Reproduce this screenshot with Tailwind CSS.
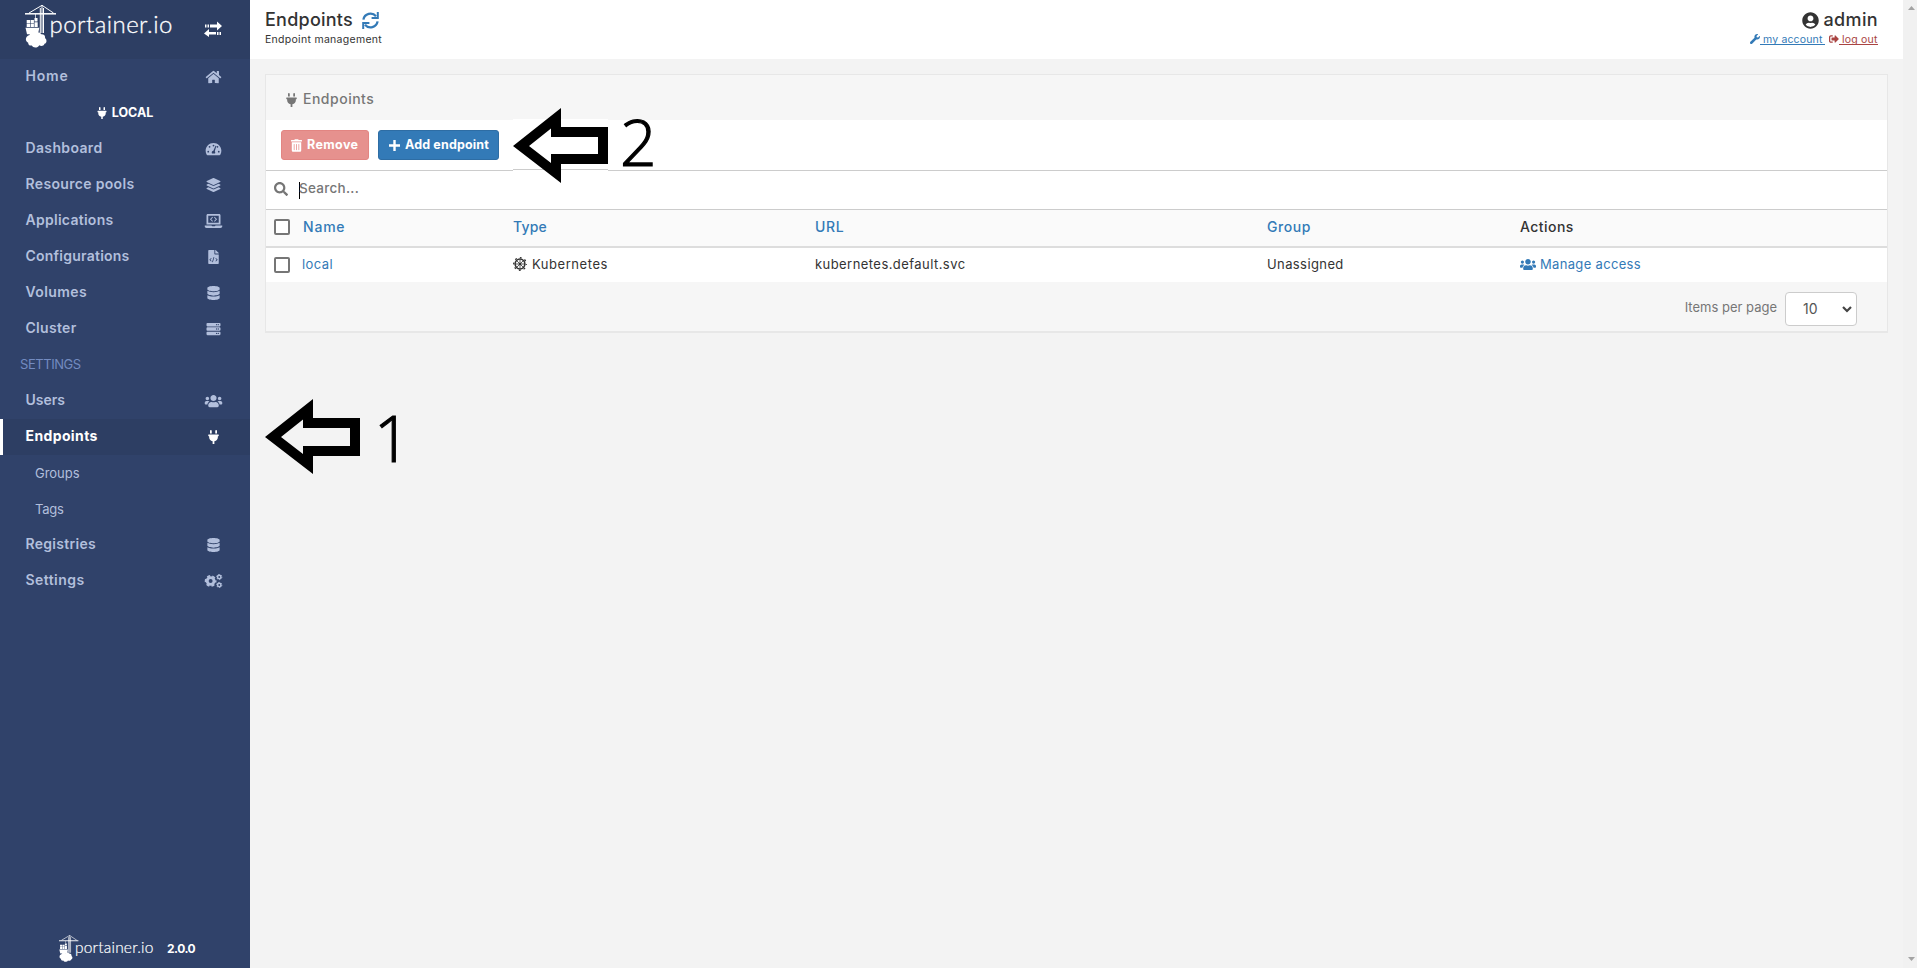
<!DOCTYPE html>
<html lang="en">
<head>
<meta charset="utf-8">
<title>Portainer</title>
<script src="https://cdn.jsdelivr.net/npm/@tailwindcss/browser@4"></script>
</head>
<body class="h-[968px] w-[1917px] overflow-hidden bg-[#f3f3f3] font-['Inter',sans-serif] text-[13px] leading-none whitespace-nowrap text-[#333]">
<svg class="hidden">
  <symbol id="home" viewBox="0 0 576 512"><path d="M280.37 148.26L96 300.11V464a16 16 0 0 0 16 16l112.06-.29a16 16 0 0 0 15.92-16V368a16 16 0 0 1 16-16h64a16 16 0 0 1 16 16v95.64a16 16 0 0 0 16 16.05L464 480a16 16 0 0 0 16-16V300L295.67 148.26a12.19 12.19 0 0 0-15.3 0zM571.6 251.47L488 182.56V44.05a12 12 0 0 0-12-12h-56a12 12 0 0 0-12 12v72.61L318.47 43a48 48 0 0 0-61 0L4.34 251.47a12 12 0 0 0-1.6 16.9l25.5 31A12 12 0 0 0 45.15 301l235.22-193.74a12.19 12.19 0 0 1 15.3 0L530.9 301a12 12 0 0 0 16.9-1.6l25.5-31a12 12 0 0 0-1.7-16.93z"/></symbol>
  <symbol id="plug" viewBox="0 0 384 512"><path d="M320 32a32 32 0 0 0-64 0v96h64zm48 128H16A16 16 0 0 0 0 176v32a16 16 0 0 0 16 16h16v32a160.07 160.07 0 0 0 128 156.8V512h64v-99.2A160.07 160.07 0 0 0 352 256v-32h16a16 16 0 0 0 16-16v-32a16 16 0 0 0-16-16zM128 32a32 32 0 0 0-64 0v96h64z"/></symbol>
  <symbol id="gauge" viewBox="0 0 576 512"><path fill-rule="evenodd" d="M288 32C129 32 0 161 0 320c0 53 14 102 39 145 6 9 16 15 27 15h444c11 0 21-6 27-15 25-43 39-92 39-145C576 161 447 32 288 32zM288 96a32 32 0 1 1 0 64a32 32 0 0 1 0-64zM144 144a32 32 0 1 1 0 64a32 32 0 0 1 0-64zM96 320a32 32 0 1 1 0 64a32 32 0 0 1 0-64zM480 320a32 32 0 1 1 0 64a32 32 0 0 1 0-64zM362 137l30 10-57 193c11 12 17 27 17 44 0 12-3 22-9 32H233c-6-10-9-20-9-32 0-34 27-62 60-64zM432 144a32 32 0 1 1 0 64a32 32 0 0 1 0-64z"/></symbol>
  <symbol id="layers" viewBox="0 0 512 512"><path d="M12.41 148.02l232.94 105.67c6.8 3.09 14.49 3.09 21.29 0l232.94-105.67c16.55-7.51 16.55-32.52 0-40.03L266.65 2.31a25.607 25.607 0 0 0-21.29 0L12.41 107.98c-16.55 7.51-16.55 32.53 0 40.04zm487.18 88.28l-58.09-26.33-161.64 73.27c-7.56 3.43-15.59 5.17-23.86 5.17s-16.29-1.74-23.86-5.17L70.51 209.97l-58.1 26.33c-16.55 7.5-16.55 32.5 0 40l232.94 105.59c6.8 3.08 14.49 3.08 21.29 0L499.59 276.3c16.55-7.5 16.55-32.5 0-40zm0 127.8l-57.87-26.23-161.86 73.37c-7.56 3.43-15.59 5.17-23.86 5.17s-16.29-1.74-23.86-5.17L70.29 337.87 12.41 364.1c-16.55 7.5-16.55 32.5 0 40l232.94 105.59c6.8 3.08 14.49 3.08 21.29 0L499.59 404.1c16.55-7.5 16.55-32.5 0-40z"/></symbol>
  <symbol id="laptop" viewBox="0 0 640 512"><path fill-rule="evenodd" d="M112 0h416c26 0 48 22 48 48v336H64V48C64 22 86 0 112 0zM128 64v256h384V64zM278 105l22 22-65 65 65 65-22 23-88-88zM362 105l-22 22 65 65-65 65 22 23 88-88zM0 416h250c0 18 14 32 32 32h76c18 0 32-14 32-32h250v32c0 35-29 64-64 64H64c-35 0-64-29-64-64z"/></symbol>
  <symbol id="filecode" viewBox="0 0 384 512"><path fill-rule="evenodd" d="M384 122v6H256V0h6c6 0 12 3 17 7l98 98c4 5 7 11 7 17zM248 160c-13 0-24-11-24-24V0H24C11 0 0 11 0 24v464c0 13 11 24 24 24h336c13 0 24-11 24-24V160zM123 401l-19 20-66-66 66-65 19 20-46 45zM168 451l-27-8 55-190 27 8zM280 421l-19-20 46-46-46-45 19-20 66 65z"/></symbol>
  <symbol id="db" viewBox="0 0 448 512"><path d="M448 73.143v45.714C448 159.143 347.667 192 224 192S0 159.143 0 118.857V73.143C0 32.857 100.333 0 224 0s224 32.857 224 73.143zM448 176v102.857C448 319.143 347.667 352 224 352S0 319.143 0 278.857V176c48.125 33.143 136.208 48.572 224 48.572S399.874 209.143 448 176zm0 160v102.857C448 479.143 347.667 512 224 512S0 479.143 0 438.857V336c48.125 33.143 136.208 48.572 224 48.572S399.874 369.143 448 336z"/></symbol>
  <symbol id="server" viewBox="0 0 512 512"><path id="unit" d="M480 160H32c-17.673 0-32-14.327-32-32V64c0-17.673 14.327-32 32-32h448c17.673 0 32 14.327 32 32v64c0 17.673-14.327 32-32 32zm-48-88c-13.255 0-24 10.745-24 24s10.745 24 24 24 24-10.745 24-24-10.745-24-24-24zm-64 0c-13.255 0-24 10.745-24 24s10.745 24 24 24 24-10.745 24-24-10.745-24-24-24z"/><use href="#unit" y="160"/><use href="#unit" y="320"/></symbol>
  <symbol id="users" viewBox="0 0 640 512"><path d="M96 224c35.3 0 64-28.7 64-64s-28.7-64-64-64-64 28.7-64 64 28.7 64 64 64zm448 0c35.3 0 64-28.7 64-64s-28.7-64-64-64-64 28.7-64 64 28.7 64 64 64zm32 32h-64c-17.6 0-33.5 7.1-45.1 18.6 40.3 22.1 68.9 62 75.1 109.4h66c17.7 0 32-14.3 32-32v-32c0-35.3-28.7-64-64-64zm-256 0c61.9 0 112-50.1 112-112S381.9 32 320 32 208 82.1 208 144s50.1 112 112 112zm76.8 32h-8.3c-20.8 10-43.9 16-68.5 16s-47.6-6-68.5-16h-8.3C179.6 288 128 339.6 128 403.2V432c0 26.5 21.5 48 48 48h288c26.5 0 48-21.5 48-48v-28.8c0-63.6-51.6-115.2-115.2-115.2zm-223.7-13.4C161.5 263.1 145.6 256 128 256H64c-35.3 0-64 28.7-64 64v32c0 17.7 14.3 32 32 32h65.9c6.3-47.4 34.9-87.3 75.2-109.4z"/></symbol>
  <symbol id="cogs" viewBox="0 0 640 512"><g fill="none" stroke="currentColor"><circle cx="215" cy="256" r="125" stroke-width="106"/><circle cx="215" cy="256" r="186" stroke-width="60" stroke-dasharray="112 82.700" stroke-dashoffset="56"/><circle cx="530" cy="110" r="62" stroke-width="54"/><circle cx="530" cy="110" r="94" stroke-width="34" stroke-dasharray="56 42.400"/><circle cx="530" cy="402" r="62" stroke-width="54"/><circle cx="530" cy="402" r="94" stroke-width="34" stroke-dasharray="56 42.400"/></g></symbol>
  <symbol id="search" viewBox="0 0 512 512"><path d="M505 442.7L405.3 343c-4.5-4.5-10.6-7-17-7H372c27.6-35.3 44-79.7 44-128C416 93.1 322.9 0 208 0S0 93.1 0 208s93.1 208 208 208c48.3 0 92.7-16.4 128-44v16.3c0 6.4 2.5 12.5 7 17l99.7 99.7c9.4 9.4 24.6 9.4 33.9 0l28.3-28.3c9.4-9.4 9.4-24.6.1-34zM208 336c-70.7 0-128-57.2-128-128 0-70.7 57.2-128 128-128 70.7 0 128 57.2 128 128 0 70.7-57.2 128-128 128z"/></symbol>
  <symbol id="wrench" viewBox="0 0 512 512"><path d="M507.73 109.1c-2.24-9.03-13.54-12.09-20.12-5.51l-74.36 74.36-67.88-11.31-11.31-67.88 74.36-74.36c6.62-6.62 3.43-17.9-5.66-20.16-47.38-11.74-99.55.91-136.58 37.93-39.64 39.64-50.55 97.1-34.05 147.2L18.74 402.76c-24.99 24.99-24.99 65.51 0 90.5 24.99 24.99 65.51 24.99 90.5 0l213.21-213.21c50.12 16.71 107.47 5.68 147.37-34.22 37.07-37.07 49.7-89.32 37.91-136.73z"/></symbol>
  <symbol id="user" viewBox="0 0 496 512"><path d="M248 8C111 8 0 119 0 256s111 248 248 248 248-111 248-248S385 8 248 8zm0 96c48.6 0 88 39.4 88 88s-39.4 88-88 88-88-39.4-88-88 39.4-88 88-88zm0 344c-58.7 0-111.3-26.6-146.5-68.2 18.8-35.4 55.6-59.8 98.5-59.8 2.4 0 4.8.4 7.1 1.1 13 4.2 26.6 6.9 40.9 6.9 14.3 0 28-2.7 40.9-6.9 2.3-.7 4.7-1.1 7.1-1.1 42.9 0 79.7 24.4 98.5 59.8C359.3 421.4 306.7 448 248 448z"/></symbol>
  <symbol id="signout" viewBox="0 0 512 512"><path d="M497 273L329 441c-15 15-41 4.5-41-17v-96H152c-13.3 0-24-10.7-24-24v-96c0-13.3 10.7-24 24-24h136V88c0-21.4 25.9-32 41-17l168 168c9.3 9.4 9.3 24.6 0 34zM192 436v-40c0-6.6-5.4-12-12-12H96c-17.7 0-32-14.3-32-32V160c0-17.7 14.3-32 32-32h84c6.6 0 12-5.4 12-12V76c0-6.6-5.4-12-12-12H96c-53 0-96 43-96 96v192c0 53 43 96 96 96h84c6.6 0 12-5.4 12-12z"/></symbol>
  <symbol id="trash" viewBox="0 0 448 512"><path d="M32 464a48 48 0 0 0 48 48h288a48 48 0 0 0 48-48V128H32zm272-256a16 16 0 0 1 32 0v224a16 16 0 0 1-32 0zm-96 0a16 16 0 0 1 32 0v224a16 16 0 0 1-32 0zm-96 0a16 16 0 0 1 32 0v224a16 16 0 0 1-32 0zM432 32H312l-9.4-18.7A24 24 0 0 0 281.1 0H166.8a23.72 23.72 0 0 0-21.4 13.3L136 32H16A16 16 0 0 0 0 48v32a16 16 0 0 0 16 16h416a16 16 0 0 0 16-16V48a16 16 0 0 0-16-16z"/></symbol>
  <symbol id="sync" viewBox="0 0 17 17"><g fill="none" stroke="currentColor" stroke-width="2.3"><path d="M1.4 7.6A7.2 7.2 0 0 1 14 4.2"/><path d="M15.6 9.4A7.2 7.2 0 0 1 3 12.8"/><path d="M15.8 0V6.1H9.6" stroke-width="2"/><path d="M1.2 17V10.9H7.4" stroke-width="2"/></g></symbol>
  <symbol id="helm" viewBox="0 0 14 14"><g fill="none" stroke="currentColor"><circle cx="7" cy="7" r="4.900" stroke-width="1.5"/><circle cx="7" cy="7" r="6.300" stroke-width="1.300" stroke-dasharray="1.800 3.148" stroke-dashoffset=".9"/><path d="M7 2.500v9M2.500 7h9M3.900 3.900l6.200 6.200M10.100 3.900l-6.200 6.200" stroke-width=".8"/></g><circle cx="7" cy="7" r="1.300"/></symbol>
  <symbol id="crane" viewBox="0 0 32 44"><g fill="none" stroke="currentColor"><path d="M0 8.8h31" stroke-width="1.5"/><path d="M17 .3L4 8M17 .3L28.500 8M15.300 3v25M18.500 3v25" stroke-width="1"/><path d="M17 0v28" stroke-width="1"/><path d="M10.500 9v4" stroke-width=".7"/></g><path d="M9.500 13h3v3.500h-3zM1.700 15h3.300v3.200H1.700zM5.600 15h3.300v3.200H5.600zM1.700 18.800h3.300V22H1.700zM5.600 18.800h3.300V22H5.600zM9.500 17.300h3.200V22H9.500zM.5 22.700h13.800l-1.300 6.500H2z"/><path d="M4.500 30c.5-2.500 4-3.200 5.800-1.200 2-1.800 5-1.500 6 .5 2.500-.3 4.200 1.500 3.700 3.700 2.300 1.800 1.800 5-.5 5.700-.7 2.300-3.500 2.800-5.200 1.500-1.500 3-6.300 3-7.500.3-2 .5-3.800-.8-3.600-2.800C-.2 36.500 0 31.200 4.500 30z"/></symbol>
</svg>

<div class="flex h-full">
  <aside class="flex w-[250px] shrink-0 flex-col bg-[#30426a] text-[14px] font-semibold text-[#b2bfdc]">
    <div class="flex h-[59px] items-start bg-[#2d3e63] pt-[5px] pl-[25px] text-white">
      <svg class="h-[44px] w-[32px] fill-current"><use href="#crane"/></svg>
      <span class="-ml-[7.500px] mt-[6px] w-[154.500px] font-['Lato'] text-[24px] leading-[26px] font-light tracking-[.45px] [-webkit-text-stroke:.3px_#fff]">portainer.io</span>
      <svg class="mt-[16px] h-4 w-[18px] fill-current" viewBox="0 0 18 16"><path d="M1 3.500h1.500v3H1zM3.500 3.500H5v3H3.500zM6 3.500h7V.5L18 5l-5 4.500V6.500H6zM17 11h-1.500v3H17zM14.500 11H13v3h1.500zM12 11H5V8L0 12.500 5 16v-2.500h7z"/></svg>
    </div>
    <nav class="flex flex-col">
      <div class="flex h-9 items-center pl-[25.500px]"><span class="mb-[2px] w-[172.500px] tracking-[.8px]">Home</span><svg class="h-[14px] w-[31px] fill-current"><use href="#home"/></svg></div>
      <div class="flex h-9 items-center justify-center gap-[5px] text-[12.500px] font-bold text-white"><svg class="h-3 w-[10px] fill-current"><use href="#plug"/></svg><span class="tracking-[-.03px]">LOCAL</span></div>
      <div class="flex h-9 items-center pl-[25.500px]"><span class="mb-[2px] w-[172.500px] tracking-[.35px]">Dashboard</span><svg class="h-[14px] w-[31px] fill-current"><use href="#gauge"/></svg></div>
      <div class="flex h-9 items-center pl-[25.500px]"><span class="mb-[2px] w-[172.500px] tracking-[.33px]">Resource pools</span><svg class="h-[14px] w-[31px] fill-current"><use href="#layers"/></svg></div>
      <div class="flex h-9 items-center pl-[25.500px]"><span class="mb-[2px] w-[172.500px] tracking-[.27px]">Applications</span><svg class="h-[14px] w-[31px] fill-current"><use href="#laptop"/></svg></div>
      <div class="flex h-9 items-center pl-[25.500px]"><span class="mb-[2px] w-[172.500px] tracking-[.23px]">Configurations</span><svg class="h-[14px] w-[31px] fill-current"><use href="#filecode"/></svg></div>
      <div class="flex h-9 items-center pl-[25.500px]"><span class="mb-[2px] w-[172.500px] tracking-[.4px]">Volumes</span><svg class="h-[14px] w-[31px] fill-current"><use href="#db"/></svg></div>
      <div class="flex h-9 items-center pl-[25.500px]"><span class="mb-[2px] w-[172.500px] tracking-[.3px]">Cluster</span><svg class="h-[14px] w-[31px] fill-current"><use href="#server"/></svg></div>
      <div class="flex h-9 items-center pl-5 text-[13px] font-normal text-[#738bc0]"><span class="mb-px tracking-[-.45px]">SETTINGS</span></div>
      <div class="flex h-9 items-center pl-[25.500px]"><span class="mb-[2px] w-[172.500px]">Users</span><svg class="h-[14px] w-[31px] fill-current"><use href="#users"/></svg></div>
      <div class="flex h-9 items-center border-l-3 border-white bg-[#2d3e63] pl-[22.500px] font-bold text-white"><span class="mb-[2px] w-[172.500px] tracking-[.38px]">Endpoints</span><svg class="h-[14px] w-[31px] fill-current"><use href="#plug"/></svg></div>
      <div class="flex h-9 items-center pl-[35px] text-[13px] font-normal"><span class="tracking-[-.03px]">Groups</span></div>
      <div class="flex h-9 items-center pl-[35px] text-[13px] font-normal"><span class="tracking-[-.27px]">Tags</span></div>
      <div class="flex h-9 items-center pl-[25.500px]"><span class="mb-[2px] w-[172.500px] tracking-[.29px]">Registries</span><svg class="h-[14px] w-[31px] fill-current"><use href="#db"/></svg></div>
      <div class="flex h-9 items-center pl-[25.500px]"><span class="mb-[2px] w-[172.500px] tracking-[.44px]">Settings</span><svg class="h-[14px] w-[31px] fill-current"><use href="#cogs"/></svg></div>
    </nav>
    <div class="mt-auto mb-[5px] flex h-7 items-start pl-[59px] text-white">
      <svg class="h-7 w-5 fill-current"><use href="#crane"/></svg>
      <span class="-ml-[4px] mt-[3px] w-[92px] font-['Lato'] text-[15.500px] leading-[18px] font-light tracking-[.2px] [-webkit-text-stroke:.2px_#fff]">portainer.io</span>
      <span class="mt-[6px] text-xs font-bold tracking-[-.5px]">2.0.0</span>
    </div>
  </aside>

  <main class="w-[1653px] shrink-0">
    <header class="flex h-[59px] justify-between bg-white pr-[25px] pl-[15px]">
      <div>
        <div class="mt-[11px] flex h-[18px] items-center text-[18px] font-medium"><span class="w-[97px] tracking-[.24px]">Endpoints</span><svg class="size-[17px] text-[#337ab7]"><use href="#sync"/></svg></div>
        <div class="mt-[6px] text-[10.500px] tracking-[.29px]">Endpoint management</div>
      </div>
      <div class="flex flex-col items-end">
        <div class="mt-[11px] flex h-[18px] items-center gap-[5px] text-[18px] font-medium"><svg class="h-[17px] w-[17px] fill-current"><use href="#user"/></svg><span class="tracking-[.36px]">admin</span></div>
        <div class="mt-[5px] flex text-[10.500px]">
          <span class="flex text-[#337ab7]"><svg class="size-[10px] fill-current"><use href="#wrench"/></svg><span class="h-[11px] w-[65px] border-b border-current pt-px pl-[3px] leading-[10px] tracking-[.16px]">my account</span></span>
          <span class="ml-[4px] flex text-[#a94442]"><svg class="size-[10px] fill-current"><use href="#signout"/></svg><span class="h-[11px] w-[39px] border-b border-current pt-px pl-[3px] leading-[10px] tracking-[.2px]">log out</span></span>
        </div>
      </div>
    </header>

    <section class="mt-[15px] ml-[15px] w-[1623px] border border-b-2 border-[#e7e7e7] bg-[#f6f6f6]">
      <div class="flex h-[45px] items-center gap-[6px] pt-1 pl-5 text-[14px] font-medium text-[#767676]"><svg class="h-[14px] w-[11px] fill-current"><use href="#plug"/></svg><span class="mb-[2px] tracking-[.5px]">Endpoints</span></div>
      <div class="flex h-[50px] items-center gap-[9px] bg-white pl-[15px] text-[12.500px] font-bold text-white">
        <button class="flex h-[30px] w-[88px] items-center gap-[5px] rounded-[3px] border border-[#e28582] bg-[#e6918e] pl-[9px]"><svg class="h-[13px] w-[11px] fill-current"><use href="#trash"/></svg><span class="tracking-[.4px]">Remove</span></button>
        <button class="flex h-[30px] w-[121px] items-center gap-[5px] rounded-[3px] border border-[#2e6da4] bg-[#337ab7] pl-[10px]"><svg class="size-[11px] fill-current" viewBox="0 0 11 11"><path d="M4.300 0h2.400v4.300H11v2.400H6.700V11H4.300V6.700H0V4.300h4.300z"/></svg><span class="tracking-[.15px]">Add endpoint</span></button>
      </div>
      <div class="flex h-[39px] items-center border-t border-[#ccc] bg-white pl-2 text-[13.500px] font-medium text-[#767676]"><svg class="mb-[2px] size-[14px] fill-current"><use href="#search"/></svg><span class="ml-[11px] flex h-[17px] items-center border-l border-black"><span class="mb-[2px] -ml-px tracking-[.27px]">Search...</span></span></div>
      <div class="grid h-[39px] grid-cols-[29px_210px_302px_452px_253px_1fr] items-center border-t border-b-2 border-t-[#ccc] border-b-[#ddd] bg-[#fafafa] pb-[2px] pl-2 text-[14px] font-medium text-[#337ab7]">
        <i class="size-4 rounded-[2px] border-2 border-[#767676] bg-white"></i><span class="tracking-[.8px]">Name</span><span class="tracking-[.2px]">Type</span><span class="tracking-[.7px]">URL</span><span class="tracking-[.55px]">Group</span><span class="tracking-[.45px] text-[#333]">Actions</span>
      </div>
      <div class="grid h-[34px] grid-cols-[29px_210px_302px_452px_253px_1fr] items-center bg-white pb-px pl-2">
        <i class="size-4 rounded-[2px] border-2 border-[#767676] bg-white"></i>
        <span class="mb-px -ml-px tracking-[.41px] text-[#337ab7]">local</span>
        <span class="flex items-center gap-[5px]"><svg class="mb-px size-[14px] fill-current"><use href="#helm"/></svg><span class="mb-px tracking-[.55px]">Kubernetes</span></span>
        <span class="mb-px tracking-[.44px]">kubernetes.default.svc</span>
        <span class="mb-px tracking-[.4px]">Unassigned</span>
        <span class="flex items-center gap-1 text-[#337ab7]"><svg class="h-[13px] w-4 fill-current"><use href="#users"/></svg><span class="mb-px tracking-[.33px]">Manage access</span></span>
      </div>
      <div class="flex h-[49px] items-center justify-end gap-[8px] pr-[30px] text-[#767676]">
        <span class="mt-[2px]">Items per page</span>
        <span class="mt-[5px] flex h-[34px] w-[72px] items-center justify-between rounded-[4px] border border-[#ccc] bg-white pr-1 pl-[17px] text-[14px] text-[#555]">10<svg class="h-[7px] w-[10px] fill-none stroke-[#444] stroke-[2.200]" viewBox="0 0 10 7"><path d="M1 1l4 4 4-4"/></svg></span>
      </div>
    </section>
  </main>
  <div class="flex w-[14px] flex-col items-center justify-between bg-[#f1f1f1] pt-[6px] pb-[7px] pl-[2px]"><svg class="h-1 w-[7px] fill-[#a3a3a3]" viewBox="0 0 7 4"><path d="M0 4l3.500-4L7 4z"/></svg><svg class="h-1 w-[7px] fill-[#a3a3a3]" viewBox="0 0 7 4"><path d="M0 0l3.500 4L7 0z"/></svg></div>
</div>

<!-- Step annotations lying over the page -->
<svg class="absolute top-[108px] left-[513px] h-[75px] w-[95px]" viewBox="0 0 95 75"><path fill="#fff" d="M0 11h95V61H0z"/><path fill="#ccc" d="M0 61h95v1H0z"/><path fill="#fff" d="M0 62h95v1H0z"/><path fill-rule="evenodd" d="M0 38L48 0v19h47v37H48V75zM16 38L38 55v-9h47V29H38v-8.500z"/></svg>
<svg class="absolute top-[399px] left-[265px] h-[75px] w-[95px]" viewBox="0 0 95 75"><path fill-rule="evenodd" d="M0 38L48 0v19h47v38H48V75zM16 38L38 55v-8h47V29H38v-8.500z"/></svg>
<span class="absolute top-[110px] left-[620px] font-['Open_Sans'] text-[64px] leading-[64px] font-light text-black [-webkit-text-stroke:1.2px_#000]">2</span>
<span class="absolute top-[406px] left-[374px] font-['Open_Sans'] text-[64px] leading-[64px] font-light text-black [-webkit-text-stroke:1.2px_#000]">1</span>
</body>
</html>
